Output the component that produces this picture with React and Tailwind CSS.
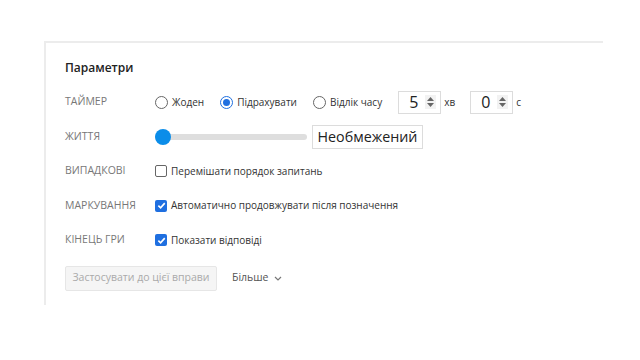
import React from 'react';

const font = { fontFamily: '"Open Sans", "Noto Sans", sans-serif' };

const Radio = ({ checked, label }) => (
    <label className="flex items-center gap-[4px] mr-[16px]">
        <span className={`w-[13px] h-[13px] rounded-full border flex items-center justify-center bg-white ${checked ? 'border-[#1f6fe0]' : 'border-[#666]'}`}>
            {checked && <span className="w-[7px] h-[7px] rounded-full bg-[#1f6fe0]" />}
        </span>
        <span className="text-[10px] text-[#333]">{label}</span>
    </label>
);

const Check = ({ checked, label }) => (
    <label className="flex items-center gap-[4px]">
        {checked ? (
            <span className="w-[12px] h-[12px] rounded-[2px] bg-[#1f6fe0] flex items-center justify-center">
                <svg width="9" height="9" viewBox="0 0 10 10">
                    <path d="M1.5 5.2 L4 7.6 L8.6 2.4" fill="none" stroke="white" strokeWidth="1.8" />
                </svg>
            </span>
        ) : (
            <span className="w-[12px] h-[12px] rounded-[2px] border border-[#666] bg-white" />
        )}
        <span className="text-[10px] text-[#333]">{label}</span>
    </label>
);

const NumberBox = ({ value }) => (
    <div className="w-[43px] h-[23px] border border-[#dcdcdc] flex items-center justify-between pl-[10px] pr-[4px]">
        <span className="text-[16px] leading-none text-[#222]">{value}</span>
        <span className="flex flex-col items-center gap-[2px] bg-[#f2f2f2] px-[2px] py-[2px]">
            <svg width="7" height="4" viewBox="0 0 7 4"><path d="M0 4 L3.5 0 L7 4 Z" fill="#666" /></svg>
            <svg width="7" height="4" viewBox="0 0 7 4"><path d="M0 0 L3.5 4 L7 0 Z" fill="#666" /></svg>
        </span>
    </div>
);

const Row = ({ label, children }) => (
    <div className="flex items-center h-[34.5px]">
        <div className="w-[90px] text-[10.5px] text-[#777] uppercase">{label}</div>
        <div className="flex items-center">{children}</div>
    </div>
);

export default function App() {
    return (
        <div className="w-[640px] h-[360px] bg-white pt-[41px] pl-[44px] pr-[37px]" style={font}>
            <div className="h-[264px] border-t-2 border-l-2 border-[#ececec] pl-[19px] pt-[15px]">
                <h2 className="text-[12px] font-semibold text-[#222] leading-[20px]">Параметри</h2>

                <div className="mt-[7px]">
                    <Row label="Таймер">
                        <Radio label="Жоден" />
                        <Radio checked label="Підрахувати" />
                        <Radio label="Відлік часу" />
                        <NumberBox value="5" />
                        <span className="text-[10px] text-[#333] ml-[3px] mr-[15px]">хв</span>
                        <NumberBox value="0" />
                        <span className="text-[10px] text-[#333] ml-[3px]">с</span>
                    </Row>
                    <Row label="Життя">
                        <div className="relative w-[152px] h-[16px] flex items-center">
                            <div className="w-full h-[6px] rounded-full bg-[#dedede]" />
                            <div className="absolute left-0 top-0 w-[16px] h-[16px] rounded-full bg-[#0b8de9]" />
                        </div>
                        <div className="ml-[5px] h-[24px] w-[111px] border border-[#dcdcdc] flex items-center justify-center text-[14.3px] text-[#222]">
                            Необмежений
                        </div>
                    </Row>
                    <Row label="Випадкові">
                        <Check label="Перемішати порядок запитань" />
                    </Row>
                    <Row label="Маркування">
                        <Check checked label="Автоматично продовжувати після позначення" />
                    </Row>
                    <Row label="Кінець гри">
                        <Check checked label="Показати відповіді" />
                    </Row>
                </div>

                <div className="flex items-center mt-[8px]">
                    <button className="h-[25px] w-[152px] bg-[#f5f5f5] border border-[#e6e6e6] rounded-[2px] text-[10.5px] text-[#aaa]">
                        Застосувати до цієї вправи
                    </button>
                    <button className="ml-[15px] flex items-center gap-[5px] text-[10.5px] text-[#555]">
                        Більше
                        <svg width="8" height="5" viewBox="0 0 8 5"><path d="M1 1 L4 4 L7 1" fill="none" stroke="#777" strokeWidth="1.2" /></svg>
                    </button>
                </div>
            </div>
        </div>
    );
}
